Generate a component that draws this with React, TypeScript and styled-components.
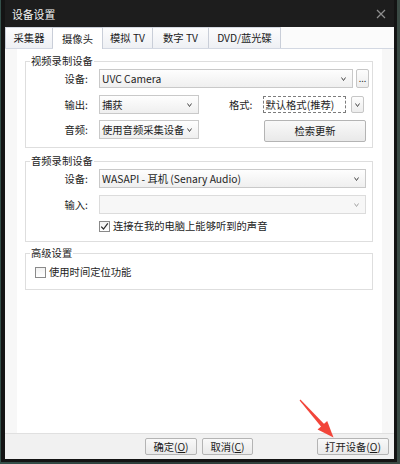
import React from "react";
import styled, { createGlobalStyle } from "styled-components";

const Global = createGlobalStyle`
  html, body { margin: 0; padding: 0; }
  body {
    width: 400px;
    height: 464px;
    overflow: hidden;
    background: #2f423e;
    font-family: "Noto Sans CJK SC", "Noto Sans", sans-serif;
  }
`;

const Desktop = styled.div`
  position: relative;
  width: 400px;
  height: 464px;
  box-sizing: border-box;
  padding: 0 3px 0 1px;
  background: linear-gradient(90deg, #34504a, #2c3c39 40%, #3a4a44);
`;

const Window = styled.div`
  width: 396px;
  height: 462px;
  box-sizing: border-box;
  padding: 0 3px 3px 4px;
  background: #141414;
  display: flex;
  flex-direction: column;
`;

const TitleBar = styled.div`
  height: 27px;
  flex: none;
  display: flex;
  align-items: center;
  justify-content: space-between;
  padding: 0 8px 0 7px;
  background: #1d1d1d;
  color: #f4f4f4;
  font-size: 10.8px;
  line-height: 14px;
`;

const CloseButton = styled.div`
  width: 10px;
  height: 10px;
  display: flex;
  align-items: center;
  justify-content: center;
`;

const Client = styled.div`
  flex: 1;
  display: flex;
  flex-direction: column;
  background: #f7f7f7;
`;

const TabStrip = styled.div`
  height: 22px;
  flex: none;
  display: flex;
  box-sizing: border-box;
  background: #fbfbfb;
  border-bottom: 1px solid #d3d8e2;
`;

const Tab = styled.div<{ $w: number; $active?: boolean }>`
  width: ${(p) => p.$w}px;
  height: ${(p) => (p.$active ? 22 : 21)}px;
  box-sizing: border-box;
  display: flex;
  align-items: center;
  justify-content: center;
  border-right: 1px solid #c9ced8;
  border-top: 1px solid ${(p) => (p.$active ? "#c9ced8" : "#d4d8e0")};
  background: ${(p) =>
    p.$active ? "#ffffff" : "linear-gradient(#fcfcfd, #eef0f4)"};
  color: #202020;
  font-size: 10.3px;
  line-height: 14px;
  white-space: nowrap;
  &:first-child {
    border-left: 1px solid #c9ced8;
  }
`;

const Pane = styled.div`
  flex: 1;
  margin: 0 12px;
  padding: 5px 9px 0 8px;
  background: #ffffff;
`;

const Group = styled.fieldset<{ $mt?: number }>`
  margin: ${(p) => p.$mt ?? 0}px 0 0 0;
  padding: 1px 0 0 0;
  min-width: 0;
  border: 1px solid #dedede;
`;

const Legend = styled.legend`
  margin-left: 4px;
  padding: 0 1px;
  font-size: 10.3px;
  line-height: 14px;
  color: #1c1c1c;
`;

const Row = styled.div<{ $h: number; $mt?: number; $mb?: number; $top?: boolean }>`
  height: ${(p) => p.$h}px;
  margin-top: ${(p) => p.$mt ?? 0}px;
  margin-bottom: ${(p) => p.$mb ?? 0}px;
  display: flex;
  align-items: ${(p) => (p.$top ? "flex-start" : "center")};
`;

const Label = styled.div`
  width: 62px;
  margin-right: 11px;
  flex: none;
  text-align: right;
  font-size: 10.3px;
  line-height: 19px;
  color: #1c1c1c;
  white-space: nowrap;
`;

const SideLabel = styled.div`
  margin-left: 30px;
  margin-right: 11px;
  font-size: 10.3px;
  line-height: 19px;
  color: #1c1c1c;
  white-space: nowrap;
`;

const SelectBox = styled.div<{ $w: number; $disabled?: boolean }>`
  width: ${(p) => p.$w}px;
  height: 19px;
  flex: none;
  box-sizing: border-box;
  display: flex;
  align-items: center;
  justify-content: space-between;
  padding: 0 6px 0 2px;
  border: 1px solid ${(p) => (p.$disabled ? "#dcdcdc" : "#c9c9c9")};
  background: ${(p) =>
    p.$disabled ? "#f7f7f7" : "linear-gradient(#fefefe, #efefef)"};
  color: #1e1e1e;
  font-size: 10.3px;
  line-height: 17px;
  white-space: nowrap;
`;

const ComboText = styled.div`
  width: 83px;
  height: 17px;
  flex: none;
  box-sizing: border-box;
  padding: 0 1px;
  border: 1px dashed #7c7c7c;
  background: #ffffff;
  color: #1e1e1e;
  font-size: 10.3px;
  line-height: 15px;
  white-space: nowrap;
  overflow: hidden;
`;

const SmallButton = styled.div<{ $h: number; $ml: number }>`
  width: 13px;
  height: ${(p) => p.$h}px;
  margin-left: ${(p) => p.$ml}px;
  flex: none;
  box-sizing: border-box;
  display: flex;
  align-items: center;
  justify-content: center;
  border: 1px solid #c6c6c6;
  border-radius: 2px;
  background: linear-gradient(#fdfdfd, #ededed);
  color: #333;
  font-size: 9px;
  line-height: 10px;
`;

const PushButton = styled.div<{ $w: number; $h: number; $ml?: number }>`
  width: ${(p) => p.$w}px;
  height: ${(p) => p.$h}px;
  margin-left: ${(p) => p.$ml ?? 0}px;
  flex: none;
  box-sizing: border-box;
  display: flex;
  align-items: center;
  justify-content: center;
  border: 1px solid #b4b4b4;
  border-radius: 2px;
  background: linear-gradient(#f9f9f9, #e9e9e9);
  color: #1c1c1c;
  font-size: 10.3px;
  line-height: 14px;
  white-space: nowrap;
`;

const Mnemonic = styled.span`
  text-decoration: underline;
  text-underline-offset: 1px;
`;

const CheckRow = styled.label<{ $ml: number }>`
  display: flex;
  align-items: center;
  margin-left: ${(p) => p.$ml}px;
  font-size: 10.3px;
  line-height: 14px;
  color: #1c1c1c;
  white-space: nowrap;
`;

const CheckBox = styled.span`
  width: 11px;
  height: 11px;
  margin-right: 3px;
  box-sizing: border-box;
  display: flex;
  align-items: center;
  justify-content: center;
  border: 1px solid #8a8a8a;
  background: linear-gradient(#f2f2f2, #ffffff);
`;

const BottomBar = styled.div`
  height: 26px;
  flex: none;
  box-sizing: border-box;
  display: flex;
  align-items: center;
  justify-content: flex-end;
  gap: 5px;
  padding: 0 5px 0 0;
  border-top: 1px solid #e0e0e0;
  background: #f1f1f1;
`;

const Overlay = styled.svg`
  position: absolute;
  left: 0;
  top: 0;
  pointer-events: none;
`;

const Chevron = ({ muted }: { muted?: boolean }) => (
  <svg width="5" height="4" viewBox="0 0 5 4">
    <polyline
      points="0.5,0.5 2.5,3.5 4.5,0.5"
      fill="none"
      stroke={muted ? "#a6a6a6" : "#4a4a4a"}
      strokeWidth="1"
    />
  </svg>
);

const Select = ({
  w,
  value,
  disabled,
}: {
  w: number;
  value?: string;
  disabled?: boolean;
}) => (
  <SelectBox $w={w} $disabled={disabled}>
    <span>{value ?? ""}</span>
    <Chevron muted={disabled} />
  </SelectBox>
);

const Check = ({ checked }: { checked?: boolean }) => (
  <CheckBox>
    {checked && (
      <svg width="9" height="9" viewBox="0 0 9 9">
        <polyline
          points="1.2,4.6 3.5,7 7.8,1.4"
          fill="none"
          stroke="#2b2b2b"
          strokeWidth="1.2"
        />
      </svg>
    )}
  </CheckBox>
);

const tabs: { label: string; w: number }[] = [
  { label: "采集器", w: 48 },
  { label: "摄像头", w: 50 },
  { label: "模拟 TV", w: 50 },
  { label: "数字 TV", w: 56 },
  { label: "DVD/蓝光碟", w: 72 },
];

export default function App() {
  return (
    <>
      <Global />
      <Desktop>
        <Window>
          <TitleBar>
            <span>设备设置</span>
            <CloseButton>
              <svg width="10" height="10" viewBox="0 0 10 10">
                <path d="M1 1 L9 9 M9 1 L1 9" stroke="#8f8f8f" strokeWidth="1.2" />
              </svg>
            </CloseButton>
          </TitleBar>
          <Client>
            <TabStrip>
              {tabs.map((t, i) => (
                <Tab key={t.label} $w={t.w} $active={i === 1}>
                  {t.label}
                </Tab>
              ))}
            </TabStrip>
            <Pane>
              <Group>
                <Legend>视频录制设备</Legend>
                <Row $h={19}>
                  <Label>设备:</Label>
                  <Select w={254} value="UVC Camera" />
                  <SmallButton $h={19} $ml={3}>...</SmallButton>
                </Row>
                <Row $h={19} $mt={7}>
                  <Label>输出:</Label>
                  <Select w={100} value="捕获" />
                  <SideLabel>格式:</SideLabel>
                  <ComboText>默认格式(推荐)</ComboText>
                  <SmallButton $h={17} $ml={5}>
                    <Chevron />
                  </SmallButton>
                </Row>
                <Row $h={22} $mt={6} $mb={5} $top>
                  <Label>音频:</Label>
                  <Select w={100} value="使用音频采集设备" />
                  <PushButton $w={102} $h={22} $ml={65}>
                    检索更新
                  </PushButton>
                </Row>
              </Group>

              <Group $mt={6}>
                <Legend>音频录制设备</Legend>
                <Row $h={19}>
                  <Label>设备:</Label>
                  <Select w={267} value="WASAPI - 耳机 (Senary Audio)" />
                </Row>
                <Row $h={19} $mt={7}>
                  <Label>输入:</Label>
                  <Select w={267} disabled />
                </Row>
                <Row $h={14} $mt={5} $mb={8}>
                  <CheckRow $ml={73}>
                    <Check checked />
                    连接在我的电脑上能够听到的声音
                  </CheckRow>
                </Row>
              </Group>

              <Group $mt={4}>
                <Legend>高级设置</Legend>
                <Row $h={14} $mt={4} $mb={10}>
                  <CheckRow $ml={9}>
                    <Check />
                    使用时间定位功能
                  </CheckRow>
                </Row>
              </Group>
            </Pane>
            <BottomBar>
              <PushButton $w={52} $h={17}>
                确定(<Mnemonic>O</Mnemonic>)
              </PushButton>
              <PushButton $w={51} $h={17}>
                取消(<Mnemonic>C</Mnemonic>)
              </PushButton>
              <PushButton $w={72} $h={17} $ml={59}>
                打开设备(<Mnemonic>O</Mnemonic>)
              </PushButton>
            </BottomBar>
          </Client>
        </Window>
        <Overlay width="400" height="464" viewBox="0 0 400 464">
          <polygon
            points="299.6,400.4 300.4,399.6 325.6,425.6 322.6,428.4"
            fill="#f2453a"
          />
          <polygon points="317.6,429.4 327.2,420.9 333.5,437.5" fill="#f2453a" />
        </Overlay>
      </Desktop>
    </>
  );
}
